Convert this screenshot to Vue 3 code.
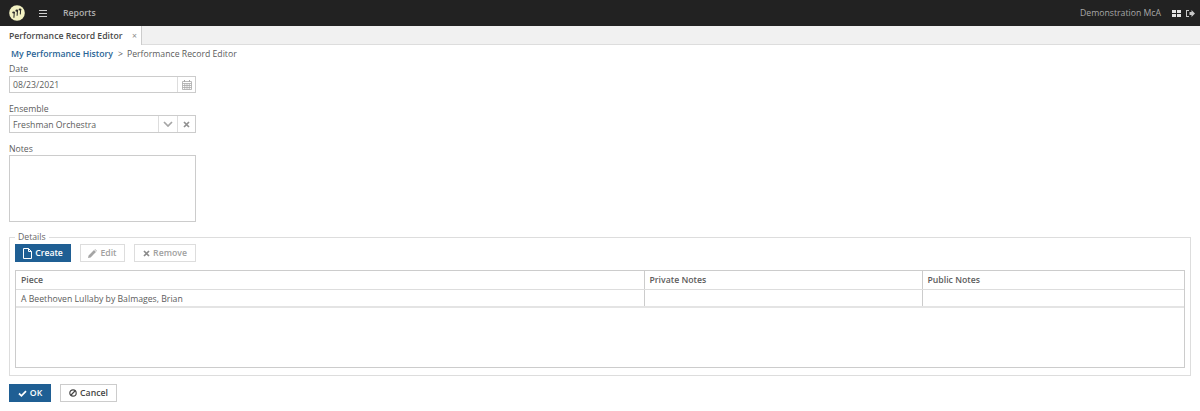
<script setup>
const rows = [{ piece: 'A Beethoven Lullaby by Balmages, Brian', priv: '', pub: '' }]
</script>

<template>
  <div class="page">
    <header class="topbar">
      <div class="left">
        <svg class="logo" width="16" height="16" viewBox="0 0 17 17">
          <circle cx="8.5" cy="8.5" r="8.3" fill="#f2f1c2" />
          <path d="M5.2 13.5 L5.6 8 M8.6 11.5 L9 6 M12 10 L12.4 4.5" stroke="#2a2a2a" stroke-width="1.1" fill="none" />
          <ellipse cx="4.9" cy="8" rx="1.5" ry="1.1" fill="#2a2a2a" />
          <ellipse cx="8.3" cy="6" rx="1.5" ry="1.1" fill="#2a2a2a" />
          <ellipse cx="11.7" cy="4.7" rx="1.5" ry="1.1" fill="#2a2a2a" />
        </svg>
        <svg class="menu" width="8" height="7" viewBox="0 0 8 7">
          <path d="M0 .5H8M0 3.5H8M0 6.5H8" stroke="#d0d0d0" stroke-width="1.2" />
        </svg>
        <span class="reports">Reports</span>
      </div>
      <div class="right">
        <span class="user">Demonstration McA</span>
        <svg width="9" height="7" viewBox="0 0 9 7">
          <path d="M0 0H4V3H0ZM5 0H9V3H5ZM0 4H4V7H0ZM5 4H9V7H5Z" fill="#e4e4e4" />
        </svg>
        <svg width="9" height="7" viewBox="0 0 9 7">
          <path d="M3 0H0V7H3V6H1V1H3ZM3.5 2H5.5V0L9 3.5 5.5 7V5H3.5Z" fill="#c8c8c8" />
        </svg>
      </div>
    </header>

    <nav class="tabstrip">
      <div class="tab">
        <span class="tab-title">Performance Record Editor</span>
        <span class="tab-x">×</span>
      </div>
    </nav>

    <main class="content">
      <div class="crumbs">
        <a class="crumb-link">My Performance History</a>
        <span class="crumb-sep">&gt;</span>
        <span>Performance Record Editor</span>
      </div>

      <div class="field date-field">
        <label>Date</label>
        <div class="inputbox">
          <span class="value">08/23/2021</span>
          <span class="addon">
            <svg width="10" height="10" viewBox="0 0 10 10">
              <path d="M.5 1.5H9.5V9.5H.5ZM.5 3.5H9.5M.5 5.5H9.5M.5 7.5H9.5M2.75 3.5V9.5M5 3.5V9.5M7.25 3.5V9.5" fill="none" stroke="#a8a8a8" stroke-width=".8" />
              <path d="M2.5 0V2M7.5 0V2" stroke="#a8a8a8" stroke-width="1" />
            </svg>
          </span>
        </div>
      </div>

      <div class="field ensemble-field">
        <label>Ensemble</label>
        <div class="inputbox tall">
          <span class="value">Freshman Orchestra</span>
          <span class="addon wide">
            <svg width="10" height="6" viewBox="0 0 10 6">
              <path d="M1 1 5 5 9 1" fill="none" stroke="#a5a5a5" stroke-width="1.7" />
            </svg>
          </span>
          <span class="addon">
            <svg width="7" height="7" viewBox="0 0 7 7">
              <path d="M1 1 6 6M6 1 1 6" fill="none" stroke="#909090" stroke-width="1.7" />
            </svg>
          </span>
        </div>
      </div>

      <div class="field notes-field">
        <label>Notes</label>
        <div class="notes"></div>
      </div>

      <fieldset class="details">
        <legend>Details</legend>
        <div class="toolbar">
          <button class="btn primary create">
            <svg width="9" height="11" viewBox="0 0 9 11">
              <path d="M.5.5H5.5L8.5 3.5V10.5H.5ZM5.5.5V3.5H8.5" fill="none" stroke="#fff" stroke-width="1" />
            </svg>
            Create
          </button>
          <button class="btn muted edit">
            <svg width="9" height="9" viewBox="0 0 9 9">
              <path d="M0 9 .6 6.4 6 1 8 3 2.6 8.4ZM6.6.4 7 0 9 2 8.6 2.4Z" fill="#a5a5a5" />
            </svg>
            Edit
          </button>
          <button class="btn muted remove">
            <svg width="7" height="7" viewBox="0 0 7 7">
              <path d="M1 1 6 6M6 1 1 6" fill="none" stroke="#8a8a8a" stroke-width="1.7" />
            </svg>
            Remove
          </button>
        </div>
        <div class="tablewrap">
          <table>
            <colgroup>
              <col class="c1" />
              <col class="c2" />
              <col />
            </colgroup>
            <thead>
              <tr>
                <th>Piece</th>
                <th>Private Notes</th>
                <th>Public Notes</th>
              </tr>
            </thead>
            <tbody>
              <tr v-for="r in rows" :key="r.piece">
                <td>{{ r.piece }}</td>
                <td>{{ r.priv }}</td>
                <td>{{ r.pub }}</td>
              </tr>
            </tbody>
          </table>
        </div>
      </fieldset>

      <div class="actions">
        <button class="btn primary ok">
          <svg width="9" height="7" viewBox="0 0 10 8">
            <path d="M1 4 3.8 6.6 9 1.2" fill="none" stroke="#fff" stroke-width="2" />
          </svg>
          OK
        </button>
        <button class="btn cancel">
          <svg width="8" height="8" viewBox="0 0 9 9">
            <circle cx="4.5" cy="4.5" r="3.6" fill="none" stroke="#444" stroke-width="1.3" />
            <path d="M2 7 7 2" stroke="#444" stroke-width="1.3" />
          </svg>
          Cancel
        </button>
      </div>
    </main>
  </div>
</template>

<style>
html, body { margin: 0; background: #fff; }
</style>

<style scoped>
.page {
  font-family: "Open Sans", "Noto Sans", sans-serif;
  font-size: 8.7px;
  color: #5c5c5c;
  height: 411px;
  overflow: hidden;
  background: #fff;
}
.topbar {
  height: 26px;
  background: #222;
  display: flex;
  justify-content: space-between;
  align-items: center;
}
.left, .right { display: flex; align-items: center; }
.logo { margin-left: 9px; }
.menu { margin-left: 14px; }
.reports { margin-left: 16px; color: #b0b0b0; font-weight: 600; }
.right { gap: 5px; padding-right: 5px; }
.user { color: #a8a8a8; margin-right: 6px; }
.tabstrip {
  height: 18px;
  background: #f1f1f1;
  border-bottom: 1px solid #ddd;
  display: flex;
}
.tab {
  width: 142px;
  box-sizing: border-box;
  height: 19px;
  background: #fff;
  border-right: 1px solid #ccc;
  padding-left: 9px;
  display: flex;
  align-items: center;
  color: #4a4a4a;
  font-weight: 600;
}
.tab-title { width: 123px; white-space: nowrap; }
.tab-x { color: #888; font-weight: 400; }
.content { padding: 0 9px; }
.crumbs {
  padding: 2px 0 0 2px;
  height: 13px;
  line-height: 15px;
  white-space: nowrap;
}
.crumb-link { color: #2a6496; font-weight: 600; }
.crumb-sep { margin: 0 4px 0 5px; }
.field label { display: block; line-height: 14px; height: 12px; }
.date-field { margin-top: 2px; }
.date-field label { margin-bottom: 2px; }
.ensemble-field label, .notes-field label { margin-bottom: 1px; }
.ensemble-field, .notes-field { margin-top: 9px; }
.inputbox {
  width: 187px;
  height: 17px;
  box-sizing: border-box;
  border: 1px solid #ccc;
  display: flex;
  align-items: stretch;
}
.inputbox.tall { height: 18px; }
.value { flex: 1; padding-left: 3px; line-height: 17px; }
.tall .value { line-height: 19px; }
.addon {
  width: 17px;
  border-left: 1px solid #ddd;
  display: flex;
  align-items: center;
  justify-content: center;
}
.addon.wide { width: 18px; }
.notes {
  width: 187px;
  height: 67px;
  box-sizing: border-box;
  border: 1px solid #ccc;
}
.details {
  margin: 9px 0 0;
  padding: 1px 5px 7px;
  width: 1182px;
  height: 145px;
  box-sizing: border-box;
  border: 1px solid #ddd;
  min-inline-size: 0;
}
.details legend {
  padding: 0 3px;
  margin-left: 0;
  line-height: 12px;
  color: #666;
}
.toolbar { display: flex; gap: 9px; }
.btn {
  font: inherit;
  font-weight: 600;
  height: 18px;
  box-sizing: border-box;
  border: 1px solid #ccc;
  background: #fff;
  padding: 0;
  display: inline-flex;
  align-items: center;
  justify-content: center;
  gap: 3px;
}
.btn.primary { background: #1f5f94; border-color: #1f5f94; color: #fff; }
.btn.muted { color: #a0a0a0; border-color: #ddd; }
.create { width: 56px; }
.edit { width: 45px; }
.remove { width: 62px; }
.tablewrap {
  margin-top: 8px;
  height: 98px;
  box-sizing: border-box;
  border: 1px solid #ccc;
}
table {
  width: 100%;
  table-layout: fixed;
  border-collapse: collapse;
}
.c1 { width: 628px; }
.c2 { width: 278px; }
th, td {
  text-align: left;
  padding: 0 0 0 5px;
  height: 18px;
  line-height: 12px;
  border-left: 1px solid #ccc;
  box-sizing: border-box;
}
th:first-child, td:first-child { border-left: 0; }
th { border-bottom: 1px solid #ddd; font-weight: 600; }
td { border-bottom: 2px solid #e4e4e4; padding-top: 2px; }
.actions { display: flex; gap: 9px; margin-top: 8px; }
.ok { width: 42px; }
.cancel { width: 57px; color: #444; }
</style>
